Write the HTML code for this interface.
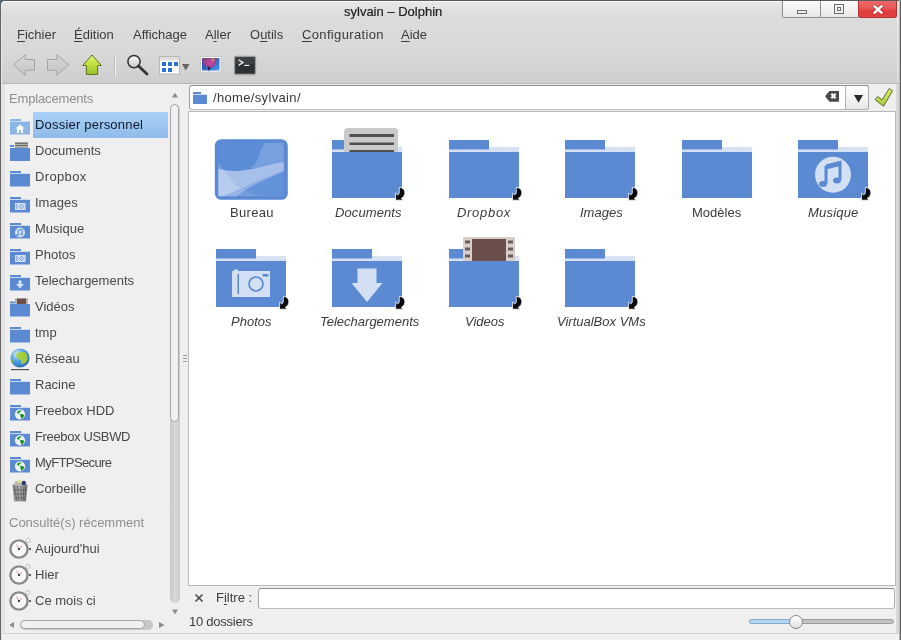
<!DOCTYPE html>
<html><head><meta charset="utf-8">
<style>
html,body{margin:0;padding:0;width:901px;height:640px;overflow:hidden;background:#efefef;}
body{position:relative;font-family:"Liberation Sans",sans-serif;font-size:13px;}
.a{position:absolute;}
.t{position:absolute;white-space:nowrap;line-height:13px;font-size:13px;will-change:transform;}
#top{left:0;top:0;width:901px;height:83px;background:linear-gradient(#e8e8e8 0px,#dcdcdc 16px,#d9d9d9 50px,#cecece 83px);}
#topline{left:0;top:83px;width:901px;height:1px;background:#b9b9b9;}
.frameL{left:0;top:0;width:1px;height:640px;background:#646464;}
.frameL2{left:1px;top:1px;width:1px;height:639px;background:#e8e8e8;}
.frameL3{left:2px;top:84px;width:3px;height:549px;background:rgba(0,0,0,0.045);}
.frameT{left:0;top:0;width:901px;height:1px;background:#5a5a5a;}
.frameT2{left:1px;top:1px;width:781px;height:1px;background:#f8f8f8;}
.frameR{left:899px;top:0;width:1px;height:640px;background:#b8b8b8;}
.frameR2{left:900px;top:0;width:1px;height:640px;background:#5e5e5e;}
.frameR3{left:896px;top:84px;width:3px;height:549px;background:#d9d9d9;}
.menu{color:#3b3b3b;}
.u{text-decoration:underline;text-underline-offset:2px;}
.side{color:#484848;}
.hdr{color:#8e8e8e;}
.lbl{color:#3a3a3a;font-size:13px;}
.it{font-style:italic;}
.fold{position:absolute;width:70px;height:58px;}
</style></head>
<body>
<div class="a" id="top"></div>
<div class="a" id="topline"></div>


<!-- title -->
<div class="t" style="left:344px;top:5px;color:#1e1e1e;-webkit-text-stroke:0.2px #1e1e1e;">sylvain – Dolphin</div>

<!-- window buttons -->
<div class="a" style="left:782px;top:0;width:37px;height:17px;border:1px solid #8e8e8e;border-top:none;border-radius:0 0 2px 2px;background:linear-gradient(#ffffff,#f0f0f0 60%,#e8e8e8);"></div>
<div class="a" style="left:797px;top:10px;width:8px;height:2px;border:1.2px solid #6a6a6a;"></div>
<div class="a" style="left:820px;top:0;width:37px;height:17px;border:1px solid #8e8e8e;border-top:none;border-radius:0 0 2px 2px;background:linear-gradient(#ffffff,#f0f0f0 60%,#e8e8e8);"></div>
<div class="a" style="left:834px;top:4px;width:8px;height:8px;border:1.2px solid #6a6a6a;"></div>
<div class="a" style="left:837px;top:7px;width:2px;height:2px;border:1.2px solid #6a6a6a;"></div>
<div class="a" style="left:858px;top:0;width:37px;height:17px;border:1px solid #b03030;border-top:none;border-radius:0 0 3px 3px;background:linear-gradient(#ee6a6a,#e85a5a 45%,#e03c3c 65%,#e04040);"></div>
<svg class="a" style="left:870px;top:3px" width="16" height="13" viewBox="0 0 16 13"><path d="M3.5 2.5 L12.5 10.5 M12.5 2.5 L3.5 10.5" stroke="#8a2020" stroke-width="4" stroke-linecap="butt" opacity="0.6"/><path d="M3.8 2.6 L12.2 10.4 M12.2 2.6 L3.8 10.4" stroke="#fff" stroke-width="2.6" stroke-linecap="butt"/></svg>
<!-- menu -->
<div class="t menu" style="left:17px;top:28px;"><span class="u">F</span>ichier</div>
<div class="t menu" style="left:74px;top:28px;"><span class="u">É</span>dition</div>
<div class="t menu" style="left:133px;top:28px;">Affichage</div>
<div class="t menu" style="left:205px;top:28px;">A<span class="u">l</span>ler</div>
<div class="t menu" style="left:250px;top:28px;">O<span class="u">u</span>tils</div>
<div class="t menu" style="left:302px;top:28px;letter-spacing:0.35px"><span class="u">C</span>onfiguration</div>
<div class="t menu" style="left:401px;top:28px;"><span class="u">A</span>ide</div>

<!-- toolbar icons placeholder -->

<svg class="a" style="left:0;top:44px" width="270" height="40" viewBox="0 44 270 40">
 <defs>
  <linearGradient id="gArr" x1="0" y1="0" x2="0" y2="1"><stop offset="0" stop-color="#d6d6d6"/><stop offset="1" stop-color="#c6c6c6"/></linearGradient>
  <linearGradient id="gUp" x1="0" y1="0" x2="0" y2="1"><stop offset="0" stop-color="#e0f480"/><stop offset="0.45" stop-color="#c4e040"/><stop offset="1" stop-color="#98c028"/></linearGradient>
  <linearGradient id="gMag" x1="0" y1="0" x2="0" y2="1"><stop offset="0" stop-color="#fafafa"/><stop offset="1" stop-color="#c8c8c8"/></linearGradient>
  <linearGradient id="gSky" x1="0" y1="0" x2="1" y2="1"><stop offset="0" stop-color="#1a3aa0"/><stop offset="1" stop-color="#4a98f0"/></linearGradient>
  <radialGradient id="gBal" cx="0.6" cy="0.45" r="0.7"><stop offset="0" stop-color="#d048a8"/><stop offset="0.6" stop-color="#984088"/><stop offset="1" stop-color="#684a78"/></radialGradient>
 </defs>
 <path d="M13.5 64.8 L25.2 54.8 L25.2 59.5 L34.5 59.5 L34.5 70.3 L25.2 70.3 L25.2 75.2 Z" fill="url(#gArr)" stroke="#a4a4a4" stroke-width="1"/>
 <path d="M68.5 64.8 L56.8 54.8 L56.8 59.5 L47.5 59.5 L47.5 70.3 L56.8 70.3 L56.8 75.2 Z" fill="url(#gArr)" stroke="#a4a4a4" stroke-width="1"/>
 <path d="M92 55 L101.3 65.5 L97.6 65.5 L97.6 74.5 L86.4 74.5 L86.4 65.5 L82.7 65.5 Z" fill="url(#gUp)" stroke="#5e7424" stroke-width="1"/>
 <rect x="114" y="56" width="1" height="21" fill="#c0c0c0"/>
 <rect x="115" y="56" width="1" height="21" fill="#f0f0f0"/>
 <circle cx="134" cy="61.6" r="6.1" fill="url(#gMag)" stroke="#363636" stroke-width="1.6"/>
 <path d="M138.5 66 L147 74" stroke="#333" stroke-width="2.8" stroke-linecap="round"/>
 <rect x="159.5" y="56.5" width="20" height="17.5" fill="#fff" stroke="#b8b8b8"/>
 <rect x="160" y="57" width="19" height="3.5" fill="#dedede"/>
 <g fill="#2a70d8">
  <rect x="162" y="62" width="4" height="4"/><rect x="168" y="62" width="4" height="4"/><rect x="174" y="62" width="4" height="4"/>
  <rect x="162" y="68" width="4" height="4"/><rect x="168" y="68" width="4" height="4"/>
 </g>
 <path d="M182 64 L189.5 64 L185.75 70.5 Z" fill="#666"/>
 <rect x="200.5" y="56.5" width="20.5" height="15.5" fill="#ffffff" stroke="#c8c8c8" stroke-width="1"/>
 <rect x="202" y="58" width="17.5" height="12.5" fill="url(#gSky)"/>
 <path d="M202 58 L216.5 58 Q217 63 213.5 66.5 L210 68.5 L206 66.5 Q202 63.5 202 58Z" fill="url(#gBal)"/>
 <circle cx="213" cy="59.8" r="1.6" fill="#d8b060" opacity="0.6"/>
 <path d="M207.5 67 L209 71.5 L210.5 67Z" fill="#301830"/>
 <rect x="234.5" y="56.5" width="21" height="18" rx="1.5" fill="#2c3032" stroke="#9c9c9c" stroke-width="1.3"/>
 <rect x="235.5" y="57.5" width="19" height="6.5" fill="#3c4042"/>
 <rect x="235" y="74.5" width="20" height="1" fill="#b8b8b8"/>
 <path d="M238.6 59.8 L243 62.6 L238.6 65.4" stroke="#f0f0f0" stroke-width="1.3" fill="none"/>
 <rect x="244.3" y="64.8" width="5" height="1.2" fill="#f0f0f0"/>
</svg>



<div class="t hdr" style="left:9px;top:92px;letter-spacing:-0.15px">Emplacements</div>
<div class="a" style="left:33px;top:112px;width:135px;height:26px;background:linear-gradient(#a9d2f7,#8fbbea);"></div>
<div class="t side" style="left:35px;top:118px;color:#10182a;letter-spacing:0.2px">Dossier personnel</div>
<svg class="a" style="left:8px;top:114px" width="24" height="24" viewBox="0 0 24 24"><rect x="2" y="5" width="11" height="2" fill="#8db6e6"/><rect x="2" y="7" width="20" height="1" fill="#c9d9f2"/><rect x="2" y="8" width="20" height="12.5" fill="#8db6e6"/><path d="M12 10.5 L16.5 14.5 L15 14.5 L15 19 L9 19 L9 14.5 L7.5 14.5 Z" fill="#fff"/><rect x="11" y="16" width="2" height="3" fill="#8db6e6"/></svg>
<div class="t side" style="left:35px;top:144px;color:#484848;letter-spacing:0px">Documents</div>
<svg class="a" style="left:8px;top:140px" width="24" height="24" viewBox="0 0 24 24"><rect x="2" y="5" width="4" height="2" fill="#5b8ad3"/><rect x="7" y="2.5" width="13" height="1.3" fill="#555"/><rect x="7" y="4.6" width="13" height="1.3" fill="#555"/><rect x="7" y="6.6" width="13" height="1" fill="#666"/><rect x="2" y="8" width="20" height="13" fill="#5b8ad3"/></svg>
<div class="t side" style="left:35px;top:170px;color:#484848;letter-spacing:0.35px">Dropbox</div>
<svg class="a" style="left:8px;top:166px" width="24" height="24" viewBox="0 0 24 24"><rect x="2" y="5" width="11" height="2" fill="#5b8ad3"/><rect x="2" y="7" width="20" height="1" fill="#c9d9f2"/><rect x="2" y="8" width="20" height="12.5" fill="#5b8ad3"/></svg>
<div class="t side" style="left:35px;top:196px;color:#484848;letter-spacing:0px">Images</div>
<svg class="a" style="left:8px;top:192px" width="24" height="24" viewBox="0 0 24 24"><rect x="2" y="5" width="11" height="2" fill="#5b8ad3"/><rect x="2" y="7" width="20" height="1" fill="#c9d9f2"/><rect x="2" y="8" width="20" height="12.5" fill="#5b8ad3"/><rect x="7" y="11" width="10.5" height="7" fill="#d3e0f4"/><rect x="8.5" y="12" width="0.8" height="5" fill="#5b8ad3"/><path d="M13.5 12.3 L15.6 14.5 L13.5 16.7 L11.4 14.5Z" fill="none" stroke="#5b8ad3" stroke-width="0.9"/></svg>
<div class="t side" style="left:35px;top:222px;color:#484848;letter-spacing:0px">Musique</div>
<svg class="a" style="left:8px;top:218px" width="24" height="24" viewBox="0 0 24 24"><rect x="2" y="5" width="11" height="2" fill="#5b8ad3"/><rect x="2" y="7" width="20" height="1" fill="#c9d9f2"/><rect x="2" y="8" width="20" height="12.5" fill="#5b8ad3"/><circle cx="12" cy="14.5" r="5" fill="#d3e0f4"/><path d="M10.2 12.3 L14.2 11.3 L14.2 16.3 M10.2 12.3 L10.2 17" stroke="#5b8ad3" stroke-width="1" fill="none"/><circle cx="9.4" cy="17" r="1.1" fill="#5b8ad3"/><circle cx="13.4" cy="16.3" r="1.1" fill="#5b8ad3"/></svg>
<div class="t side" style="left:35px;top:248px;color:#484848;letter-spacing:0px">Photos</div>
<svg class="a" style="left:8px;top:244px" width="24" height="24" viewBox="0 0 24 24"><rect x="2" y="5" width="11" height="2" fill="#5b8ad3"/><rect x="2" y="7" width="20" height="1" fill="#c9d9f2"/><rect x="2" y="8" width="20" height="12.5" fill="#5b8ad3"/><rect x="7" y="11" width="10.5" height="7" fill="#d3e0f4"/><rect x="8.5" y="12" width="0.8" height="5" fill="#5b8ad3"/><path d="M13.5 12.3 L15.6 14.5 L13.5 16.7 L11.4 14.5Z" fill="none" stroke="#5b8ad3" stroke-width="0.9"/></svg>
<div class="t side" style="left:35px;top:274px;color:#484848;letter-spacing:0px">Telechargements</div>
<svg class="a" style="left:8px;top:270px" width="24" height="24" viewBox="0 0 24 24"><rect x="2" y="5" width="11" height="2" fill="#5b8ad3"/><rect x="2" y="7" width="20" height="1" fill="#c9d9f2"/><rect x="2" y="8" width="20" height="12.5" fill="#5b8ad3"/><path d="M10.5 10.5 L13.5 10.5 L13.5 14 L16 14 L12 18.5 L8 14 L10.5 14 Z" fill="#d3e0f4"/></svg>
<div class="t side" style="left:35px;top:300px;color:#484848;letter-spacing:0px">Vidéos</div>
<svg class="a" style="left:8px;top:296px" width="24" height="24" viewBox="0 0 24 24"><rect x="2" y="5.5" width="5" height="2" fill="#5b8ad3"/><rect x="7" y="2.5" width="13" height="5.5" fill="#cfc4c0"/><rect x="9" y="2.5" width="9" height="5.5" fill="#6e4e4a"/><rect x="7.5" y="3" width="1" height="1" fill="#555"/><rect x="7.5" y="5.5" width="1" height="1" fill="#555"/><rect x="18.5" y="3" width="1" height="1" fill="#555"/><rect x="18.5" y="5.5" width="1" height="1" fill="#555"/><rect x="2" y="8" width="20" height="12.5" fill="#5b8ad3"/></svg>
<div class="t side" style="left:35px;top:326px;color:#484848;letter-spacing:0px">tmp</div>
<svg class="a" style="left:8px;top:322px" width="24" height="24" viewBox="0 0 24 24"><rect x="2" y="5" width="11" height="2" fill="#5b8ad3"/><rect x="2" y="7" width="20" height="1" fill="#c9d9f2"/><rect x="2" y="8" width="20" height="12.5" fill="#5b8ad3"/></svg>
<div class="t side" style="left:35px;top:352px;color:#484848;letter-spacing:0px">Réseau</div>
<svg class="a" style="left:8px;top:348px" width="24" height="24" viewBox="0 0 24 24"><defs><radialGradient id="glb" cx="0.35" cy="0.3" r="0.75"><stop offset="0" stop-color="#d8f0ff"/><stop offset="0.5" stop-color="#4a9ee0"/><stop offset="1" stop-color="#2a6ab8"/></radialGradient></defs><circle cx="12" cy="10" r="9.6" fill="url(#glb)"/><path d="M8 6 Q12 3 17 4 Q21 8 19 13 Q16 17 13 16 Q14 12 11 11 Q8 10 8 6Z" fill="#a8d030" opacity="0.9"/><path d="M3 9 Q5 12 6 16 Q3 14 3 9Z" fill="#98c030"/><rect x="3" y="21" width="18" height="1.2" fill="#555"/></svg>
<div class="t side" style="left:35px;top:378px;color:#484848;letter-spacing:0px">Racine</div>
<svg class="a" style="left:8px;top:374px" width="24" height="24" viewBox="0 0 24 24"><rect x="2" y="5" width="11" height="2" fill="#5b8ad3"/><rect x="2" y="7" width="20" height="1" fill="#c9d9f2"/><rect x="2" y="8" width="20" height="12.5" fill="#5b8ad3"/></svg>
<div class="t side" style="left:35px;top:404px;color:#484848;letter-spacing:0px">Freebox HDD</div>
<svg class="a" style="left:8px;top:400px" width="24" height="24" viewBox="0 0 24 24"><rect x="2" y="5" width="11" height="2" fill="#5b8ad3"/><rect x="2" y="7" width="20" height="1" fill="#c9d9f2"/><rect x="2" y="8" width="20" height="12.5" fill="#5b8ad3"/><circle cx="12" cy="14.3" r="5.1" fill="#eef4f8"/><path d="M8.8 12 Q10.5 10 13.8 10.2 L12.6 11.6 Q11.4 11.8 10.9 13 L11.5 14.2 Q9.8 13.8 8.8 12Z" fill="#12901a"/><path d="M12.2 14 Q15 13.6 16.3 15.2 Q15.6 17.6 13.6 19.2 Q13.3 17.2 12.4 16.2 Z" fill="#12901a"/></svg>
<div class="t side" style="left:35px;top:430px;color:#484848;letter-spacing:-0.35px">Freebox USBWD</div>
<svg class="a" style="left:8px;top:426px" width="24" height="24" viewBox="0 0 24 24"><rect x="2" y="5" width="11" height="2" fill="#5b8ad3"/><rect x="2" y="7" width="20" height="1" fill="#c9d9f2"/><rect x="2" y="8" width="20" height="12.5" fill="#5b8ad3"/><circle cx="12" cy="14.3" r="5.1" fill="#eef4f8"/><path d="M8.8 12 Q10.5 10 13.8 10.2 L12.6 11.6 Q11.4 11.8 10.9 13 L11.5 14.2 Q9.8 13.8 8.8 12Z" fill="#12901a"/><path d="M12.2 14 Q15 13.6 16.3 15.2 Q15.6 17.6 13.6 19.2 Q13.3 17.2 12.4 16.2 Z" fill="#12901a"/></svg>
<div class="t side" style="left:35px;top:456px;color:#484848;letter-spacing:-0.6px">MyFTPSecure</div>
<svg class="a" style="left:8px;top:452px" width="24" height="24" viewBox="0 0 24 24"><rect x="2" y="5" width="11" height="2" fill="#5b8ad3"/><rect x="2" y="7" width="20" height="1" fill="#c9d9f2"/><rect x="2" y="8" width="20" height="12.5" fill="#5b8ad3"/><circle cx="12" cy="14.3" r="5.1" fill="#eef4f8"/><path d="M8.8 12 Q10.5 10 13.8 10.2 L12.6 11.6 Q11.4 11.8 10.9 13 L11.5 14.2 Q9.8 13.8 8.8 12Z" fill="#12901a"/><path d="M12.2 14 Q15 13.6 16.3 15.2 Q15.6 17.6 13.6 19.2 Q13.3 17.2 12.4 16.2 Z" fill="#12901a"/></svg>
<div class="t side" style="left:35px;top:482px;color:#484848;letter-spacing:0px">Corbeille</div>
<svg class="a" style="left:8px;top:478px" width="24" height="24" viewBox="0 0 24 24"><defs><linearGradient id="gtr" x1="0" x2="1"><stop offset="0" stop-color="#8a8a8a"/><stop offset="0.5" stop-color="#b4b4b8"/><stop offset="1" stop-color="#7a7a7a"/></linearGradient></defs><path d="M4.5 6.5 L19.5 6.5 L18 23.5 L6 23.5Z" fill="url(#gtr)"/><path d="M6 8 L9 23 M9.5 8 L11 23 M13 8 L13 23 M16 8 L15 23 M18 8 L17 23 M6.5 12 L17.5 12 M6.8 16 L17.2 16 M7.2 20 L16.8 20" stroke="#4a4a4a" stroke-width="0.8" opacity="0.85"/><path d="M4.5 6.5 Q8 4 12 5 Q16 4 19.5 6.5" fill="#b0a8a0"/><circle cx="8.5" cy="5" r="2" fill="#c8b8a8"/><circle cx="12" cy="3.2" r="1.8" fill="#d8e880"/><circle cx="15.8" cy="5" r="2.2" fill="#303a70"/></svg>
<div class="t hdr" style="left:9px;top:516px;">Consulté(s) récemment</div>
<div class="t side" style="left:35px;top:542px">Aujourd'hui</div>
<svg class="a" style="left:7px;top:537px" width="26" height="24" viewBox="0 0 26 24"><circle cx="12" cy="12" r="8.6" fill="#f8f8f8" stroke="#8a8a8a" stroke-width="2.4"/><circle cx="21" cy="3.5" r="2" fill="#fff" stroke="#aaa" stroke-width="0.8"/><path d="M9.5 7.5 L12 12 L15 9" stroke="#c88" stroke-width="0.8" fill="none"/><circle cx="12" cy="12" r="1.1" fill="#222"/><circle cx="23" cy="12" r="1" fill="#333"/></svg>
<div class="t side" style="left:35px;top:568px">Hier</div>
<svg class="a" style="left:7px;top:563px" width="26" height="24" viewBox="0 0 26 24"><circle cx="12" cy="12" r="8.6" fill="#f8f8f8" stroke="#8a8a8a" stroke-width="2.4"/><circle cx="21" cy="3.5" r="2" fill="#fff" stroke="#aaa" stroke-width="0.8"/><path d="M9.5 7.5 L12 12 L15 9" stroke="#c88" stroke-width="0.8" fill="none"/><circle cx="12" cy="12" r="1.1" fill="#222"/><circle cx="23" cy="12" r="1" fill="#333"/></svg>
<div class="t side" style="left:35px;top:594px">Ce mois ci</div>
<svg class="a" style="left:7px;top:589px" width="26" height="24" viewBox="0 0 26 24"><circle cx="12" cy="12" r="8.6" fill="#f8f8f8" stroke="#8a8a8a" stroke-width="2.4"/><circle cx="21" cy="3.5" r="2" fill="#fff" stroke="#aaa" stroke-width="0.8"/><path d="M9.5 7.5 L12 12 L15 9" stroke="#c88" stroke-width="0.8" fill="none"/><circle cx="12" cy="12" r="1.1" fill="#222"/><circle cx="23" cy="12" r="1" fill="#333"/></svg>
<svg class="a" style="left:168px;top:90px" width="14" height="10"><path d="M4 7.5 L10 7.5 L7 2.8Z" fill="#8c8c8c"/></svg>
<div class="a" style="left:170px;top:104px;width:10px;height:499px;border-radius:5px;background:linear-gradient(90deg,#c8c8c8,#d8d8d8 50%,#cacaca);"></div>
<div class="a" style="left:170px;top:104px;width:7px;height:316px;border-radius:5px;border:1.5px solid #a6a6a6;background:#f0f0f0;"></div>
<svg class="a" style="left:168px;top:606px" width="14" height="10"><path d="M4 3.5 L10 3.5 L7 8.5Z" fill="#8c8c8c"/></svg>
<svg class="a" style="left:6px;top:619px" width="12" height="12"><path d="M8 3 L8 9 L3.2 6Z" fill="#8c8c8c"/></svg>
<div class="a" style="left:20px;top:620px;width:133px;height:10px;border-radius:5px;background:#c8c8c8;"></div>
<div class="a" style="left:20px;top:620px;width:123px;height:7px;border-radius:5px;border:1.5px solid #a2a2a2;background:#f0f0f0;"></div>
<svg class="a" style="left:156px;top:619px" width="12" height="12"><path d="M3 3 L3 9 L8.5 6Z" fill="#8c8c8c"/></svg>
<div class="a" style="left:183px;top:355px;width:4px;height:1px;background:#9a9a9a;box-shadow:0 3px 0 #9a9a9a,0 6px 0 #9a9a9a;"></div>
<div class="a" style="left:189px;top:85px;width:678px;height:23px;border:1px solid;border-color:#8c8c8c #b0b0b0 #bcbcbc #a0a0a0;border-radius:3px;background:#fff;"></div>
<div class="a" style="left:845px;top:85px;width:22px;height:23px;border:1px solid;border-color:#8c8c8c #a8a8a8 #b0b0b0 #b0b0b0;border-radius:0 3px 3px 0;background:linear-gradient(#ffffff,#e8e8e8);"></div>
<svg class="a" style="left:852px;top:93px" width="14" height="12"><path d="M2 2 L11 2 L6.5 9.7Z" fill="#2a2a2a"/></svg>
<svg class="a" style="left:192px;top:90px" width="16" height="16" viewBox="0 0 16 16"><rect x="1" y="2" width="8" height="2" fill="#5b8ad3"/><rect x="1" y="4" width="14" height="1" fill="#c9d9f2"/><rect x="1" y="5" width="14" height="9" fill="#5b8ad3"/></svg>
<div class="t" style="left:213px;top:91px;color:#383838;letter-spacing:0.34px">/home/sylvain/</div>
<svg class="a" style="left:824px;top:90px" width="16" height="13" viewBox="0 0 16 13"><path d="M1 6.3 L5.5 1 L15 1 L15 11.7 L5.5 11.7 Z" fill="#4a4a4a"/><path d="M7.4 3.7 L11.6 8.3 M11.6 3.7 L7.4 8.3" stroke="#fff" stroke-width="2.2"/></svg>
<svg class="a" style="left:872px;top:86px" width="22" height="22" viewBox="0 0 22 22"><defs><linearGradient id="gChk" x1="0" y1="0" x2="0" y2="1"><stop offset="0" stop-color="#d8f070"/><stop offset="1" stop-color="#a8cc40"/></linearGradient></defs><path d="M3 13.5 L6 10.5 L10 14 L17.3 2.5 L20.6 4.8 L11.5 20.2 Z" fill="url(#gChk)" stroke="#586c28" stroke-width="1" stroke-linejoin="round"/></svg>
<div class="a" style="left:188px;top:111px;width:706px;height:473px;border:1px solid #b8b8b8;background:#fff;"></div>
<svg class="a" style="left:214px;top:138px" width="75" height="63" viewBox="0 0 75 63">
<defs><clipPath id="cpb"><rect x="4.3" y="4.8" width="65.5" height="53.5"/></clipPath></defs>
<rect x="0.8" y="1.2" width="73" height="60.6" rx="6.5" fill="#5b89d3"/>
<rect x="4.3" y="4.8" width="65.5" height="53.5" fill="#5c8cd6"/>
<g clip-path="url(#cpb)">
<path d="M51 4 Q46 12 44 20 Q42 27 36 30 L75 30 L75 4 Z" fill="#78a0de"/>
<path d="M0 30 Q12 33.5 25 33 Q40 31.5 55 27 Q64 24 75 24 L75 31 Q55 40 40 47 Q25 55 18 63 L0 63 Z" fill="#a6c0ea"/>
<path d="M0 20 Q8 28 14 38 Q22 50 40 56 Q55 60 75 58 L75 63 L0 63 Z" fill="#ffffff" opacity="0.18"/>
<path d="M0 63 Q30 48 75 30 L75 63Z" fill="#6e9ade" opacity="0.45"/>
</g></svg>
<div class="t lbl" style="left:230px;top:206px;letter-spacing:0.3px">Bureau</div>
<svg class="a" style="left:332px;top:126px" width="76" height="76" viewBox="0 -14 76 76"><rect x="0" y="7" width="70" height="5" fill="#d6e1f3"/><rect x="0" y="0" width="14" height="9.5" fill="#5b8ad3"/><rect x="12" y="-12" width="54" height="24" rx="4" fill="#cacaca"/><rect x="12" y="8" width="54" height="4" fill="#cacaca"/><rect x="17.5" y="-6" width="44.5" height="3" fill="#505050"/><rect x="17.5" y="2.5" width="44.5" height="2.5" fill="#505050"/><rect x="17.5" y="10" width="44.5" height="2" fill="#505050"/><rect x="0" y="12" width="70" height="46" fill="#5b8ad3"/></svg>
<svg class="a" style="left:394px;top:186px" width="12" height="15" viewBox="0 0 12 15"><path d="M5.6 1.2 Q11.2 2.4 10.9 7.2 Q10.6 11 7.3 12.3 L9 14.2 L1.5 14.2 L1.7 7 L3.8 8.9 Q5.6 8 5.3 6 Q5 3.8 5.6 1.2 Z" fill="#0a0a0a" stroke="#fff" stroke-width="0.8" stroke-linejoin="round"/></svg>
<div class="t lbl it" style="left:335px;top:206px;letter-spacing:0.1px">Documents</div>
<svg class="a" style="left:449px;top:126px" width="76" height="76" viewBox="0 -14 76 76"><rect x="0" y="7" width="70" height="5" fill="#d6e1f3"/><rect x="0" y="0" width="40" height="9.5" fill="#5b8ad3"/><rect x="0" y="12" width="70" height="46" fill="#5b8ad3"/></svg>
<svg class="a" style="left:511px;top:186px" width="12" height="15" viewBox="0 0 12 15"><path d="M5.6 1.2 Q11.2 2.4 10.9 7.2 Q10.6 11 7.3 12.3 L9 14.2 L1.5 14.2 L1.7 7 L3.8 8.9 Q5.6 8 5.3 6 Q5 3.8 5.6 1.2 Z" fill="#0a0a0a" stroke="#fff" stroke-width="0.8" stroke-linejoin="round"/></svg>
<div class="t lbl it" style="left:457px;top:206px;letter-spacing:0.7px">Dropbox</div>
<svg class="a" style="left:565px;top:126px" width="76" height="76" viewBox="0 -14 76 76"><rect x="0" y="7" width="70" height="5" fill="#d6e1f3"/><rect x="0" y="0" width="40" height="9.5" fill="#5b8ad3"/><rect x="0" y="12" width="70" height="46" fill="#5b8ad3"/></svg>
<svg class="a" style="left:627px;top:186px" width="12" height="15" viewBox="0 0 12 15"><path d="M5.6 1.2 Q11.2 2.4 10.9 7.2 Q10.6 11 7.3 12.3 L9 14.2 L1.5 14.2 L1.7 7 L3.8 8.9 Q5.6 8 5.3 6 Q5 3.8 5.6 1.2 Z" fill="#0a0a0a" stroke="#fff" stroke-width="0.8" stroke-linejoin="round"/></svg>
<div class="t lbl it" style="left:580px;top:206px">Images</div>
<svg class="a" style="left:682px;top:126px" width="76" height="76" viewBox="0 -14 76 76"><rect x="0" y="7" width="70" height="5" fill="#d6e1f3"/><rect x="0" y="0" width="40" height="9.5" fill="#5b8ad3"/><rect x="0" y="12" width="70" height="46" fill="#5b8ad3"/></svg>
<div class="t lbl" style="left:692px;top:206px">Modèles</div>
<svg class="a" style="left:798px;top:126px" width="76" height="76" viewBox="0 -14 76 76"><rect x="0" y="7" width="70" height="5" fill="#d6e1f3"/><rect x="0" y="0" width="40" height="9.5" fill="#5b8ad3"/><rect x="0" y="12" width="70" height="46" fill="#5b8ad3"/><circle cx="35" cy="34.7" r="18" fill="#d3e0f4"/><path d="M28 26 L42 22.5 L42 40 M28 26 L28 44" stroke="#5b8ad3" stroke-width="3" fill="none"/><path d="M28 25 L42 21.5 L42 26 L28 29.5Z" fill="#5b8ad3"/><ellipse cx="25" cy="44" rx="4" ry="3" fill="#5b8ad3"/><ellipse cx="39" cy="40.5" rx="4" ry="3" fill="#5b8ad3"/></svg>
<svg class="a" style="left:860px;top:186px" width="12" height="15" viewBox="0 0 12 15"><path d="M5.6 1.2 Q11.2 2.4 10.9 7.2 Q10.6 11 7.3 12.3 L9 14.2 L1.5 14.2 L1.7 7 L3.8 8.9 Q5.6 8 5.3 6 Q5 3.8 5.6 1.2 Z" fill="#0a0a0a" stroke="#fff" stroke-width="0.8" stroke-linejoin="round"/></svg>
<div class="t lbl it" style="left:808px;top:206px;letter-spacing:0.2px">Musique</div>
<svg class="a" style="left:216px;top:235px" width="76" height="76" viewBox="0 -14 76 76"><rect x="0" y="7" width="70" height="5" fill="#d6e1f3"/><rect x="0" y="0" width="40" height="9.5" fill="#5b8ad3"/><rect x="0" y="12" width="70" height="46" fill="#5b8ad3"/><rect x="16" y="22" width="38" height="26" fill="#d3e0f4"/><rect x="18" y="20.5" width="4" height="2" fill="#d3e0f4"/><rect x="21.5" y="25" width="1.5" height="20" fill="#5b8ad3"/><circle cx="40" cy="35" r="7" fill="none" stroke="#5b8ad3" stroke-width="1.7"/><rect x="46.5" y="25" width="6" height="2.5" fill="#5b8ad3"/></svg>
<svg class="a" style="left:278px;top:295px" width="12" height="15" viewBox="0 0 12 15"><path d="M5.6 1.2 Q11.2 2.4 10.9 7.2 Q10.6 11 7.3 12.3 L9 14.2 L1.5 14.2 L1.7 7 L3.8 8.9 Q5.6 8 5.3 6 Q5 3.8 5.6 1.2 Z" fill="#0a0a0a" stroke="#fff" stroke-width="0.8" stroke-linejoin="round"/></svg>
<div class="t lbl it" style="left:231px;top:315px">Photos</div>
<svg class="a" style="left:332px;top:235px" width="76" height="76" viewBox="0 -14 76 76"><rect x="0" y="7" width="70" height="5" fill="#d6e1f3"/><rect x="0" y="0" width="40" height="9.5" fill="#5b8ad3"/><rect x="0" y="12" width="70" height="46" fill="#5b8ad3"/><path d="M41.5 19.5 L60.5 19.5 L60.5 34 L66.5 34 L51 53 L35.5 34 L41.5 34 Z" transform="translate(-16 0)" fill="#d3e0f4"/></svg>
<svg class="a" style="left:394px;top:295px" width="12" height="15" viewBox="0 0 12 15"><path d="M5.6 1.2 Q11.2 2.4 10.9 7.2 Q10.6 11 7.3 12.3 L9 14.2 L1.5 14.2 L1.7 7 L3.8 8.9 Q5.6 8 5.3 6 Q5 3.8 5.6 1.2 Z" fill="#0a0a0a" stroke="#fff" stroke-width="0.8" stroke-linejoin="round"/></svg>
<div class="t lbl it" style="left:320px;top:315px;letter-spacing:0px">Telechargements</div>
<svg class="a" style="left:449px;top:235px" width="76" height="76" viewBox="0 -14 76 76"><rect x="0" y="7" width="70" height="5" fill="#d6e1f3"/><rect x="0" y="0" width="14" height="9.5" fill="#5b8ad3"/><rect x="14" y="-12" width="52" height="24" fill="#d6ceca"/><rect x="23" y="-10" width="34" height="22" fill="#6c4e4b"/><rect x="16" y="-8.5" width="5" height="3" fill="#6c5a58"/><rect x="59" y="-8.5" width="5" height="3" fill="#6c5a58"/><rect x="16" y="-1.5" width="5" height="3" fill="#6c5a58"/><rect x="59" y="-1.5" width="5" height="3" fill="#6c5a58"/><rect x="16" y="5.5" width="5" height="3" fill="#6c5a58"/><rect x="59" y="5.5" width="5" height="3" fill="#6c5a58"/><rect x="0" y="12" width="70" height="46" fill="#5b8ad3"/></svg>
<svg class="a" style="left:511px;top:295px" width="12" height="15" viewBox="0 0 12 15"><path d="M5.6 1.2 Q11.2 2.4 10.9 7.2 Q10.6 11 7.3 12.3 L9 14.2 L1.5 14.2 L1.7 7 L3.8 8.9 Q5.6 8 5.3 6 Q5 3.8 5.6 1.2 Z" fill="#0a0a0a" stroke="#fff" stroke-width="0.8" stroke-linejoin="round"/></svg>
<div class="t lbl it" style="left:465px;top:315px">Videos</div>
<svg class="a" style="left:565px;top:235px" width="76" height="76" viewBox="0 -14 76 76"><rect x="0" y="7" width="70" height="5" fill="#d6e1f3"/><rect x="0" y="0" width="40" height="9.5" fill="#5b8ad3"/><rect x="0" y="12" width="70" height="46" fill="#5b8ad3"/></svg>
<svg class="a" style="left:627px;top:295px" width="12" height="15" viewBox="0 0 12 15"><path d="M5.6 1.2 Q11.2 2.4 10.9 7.2 Q10.6 11 7.3 12.3 L9 14.2 L1.5 14.2 L1.7 7 L3.8 8.9 Q5.6 8 5.3 6 Q5 3.8 5.6 1.2 Z" fill="#0a0a0a" stroke="#fff" stroke-width="0.8" stroke-linejoin="round"/></svg>
<div class="t lbl it" style="left:557px;top:315px">VirtualBox VMs</div>
<svg class="a" style="left:193px;top:592px" width="12" height="12"><path d="M2.5 2.5 L9.5 9.5 M9.5 2.5 L2.5 9.5" stroke="#444" stroke-width="1.5"/></svg>
<div class="t side" style="left:216px;top:591px;color:#3c3c3c">F<span class="u">i</span>ltre :</div>
<div class="a" style="left:258px;top:588px;width:635px;height:19px;border:1px solid;border-color:#8c8c8c #b0b0b0 #bcbcbc #a4a4a4;border-radius:3px;background:#fff;"></div>
<div class="t side" style="left:189px;top:615px;color:#3c3c3c;letter-spacing:-0.25px">10 dossiers</div>
<div class="a" style="left:749px;top:619px;width:143px;height:3px;border:1px solid #9a9a9a;border-radius:3px;background:#c4c4c4;"></div>
<div class="a" style="left:749px;top:619px;width:47px;height:3px;border:1px solid #8aa8c8;border-radius:3px 0 0 3px;background:#b2d8f8;"></div>
<div class="a" style="left:789px;top:615px;width:12px;height:12px;border:1px solid #8a8a8a;border-radius:50%;background:linear-gradient(#ffffff,#e0e0e0);"></div>
<div class="a" style="left:2px;top:633px;width:897px;height:1px;background:#d4d4d4;"></div>
<div class="a" style="left:2px;top:634px;width:897px;height:6px;background:#f0f0f0;"></div>
<div class="a frameT"></div><div class="a frameT2"></div><div class="a frameL"></div><div class="a frameL2"></div><div class="a frameL3"></div><div class="a frameR"></div><div class="a frameR2"></div><div class="a frameR3"></div><div class="a" style="left:897px;top:18px;width:2px;height:65px;background:linear-gradient(#e8e8e8,#dadada);"></div>
<svg class="a" style="left:0;top:0" width="5" height="5"><path d="M0 0 L5 0 L5 1 Q1.5 1 1 5 L0 5 Z" fill="#5a6470"/><path d="M5 1 Q1.5 1 1 5 L2 5 Q2.5 2 5 2 Z" fill="#f0f0f0"/></svg>
</body></html>
